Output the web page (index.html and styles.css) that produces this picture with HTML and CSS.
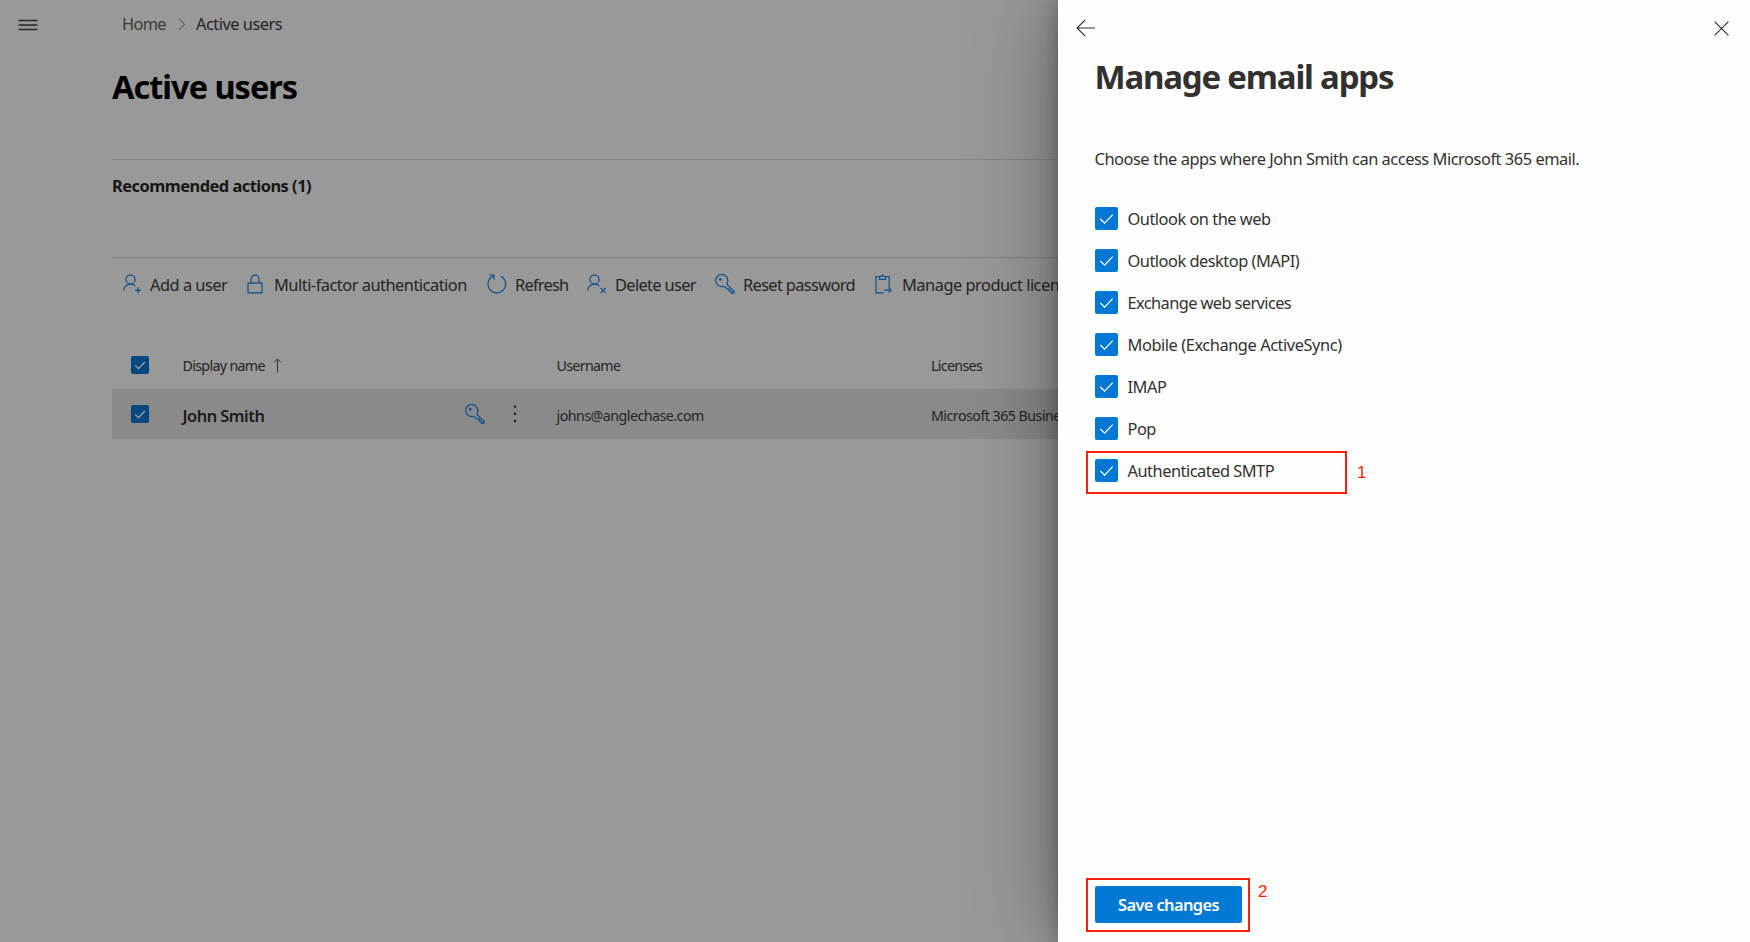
FILE: index.html
```html
<!DOCTYPE html>
<html lang="en">
<head>
<meta charset="utf-8">
<title>Active users</title>
<link rel="stylesheet" href="styles.css">
</head>
<body>
<svg class="defs" width="0" height="0">
  <symbol id="key" viewBox="0 0 20 20"><path d="M12.3 10.9 19 17.2V19.2H16.2V17.2H14.2V15.2H12.2L10.6 13.4 8.3 12.3A6 6 0 1 1 12.3 8.7Z"/><circle cx="5.3" cy="5.4" r=".7"/></symbol>
  <symbol id="check" viewBox="0 0 23 23"><path d="M5.3 12 9.6 16.1 17.7 7.7"/></symbol>
</svg>
<main class="page">
  <header class="topbar">
    <svg class="menu" width="20" height="12" viewBox="0 0 20 12"><path d="M.5 1.5h19M.5 6h19M.5 10.5h19"/></svg>
    <nav class="crumbs">
      <span class="crumb-home">Home</span>
      <svg class="chevron" width="8" height="13" viewBox="0 0 8 13"><path d="M1 .7 6.6 6.3 1 11.9"/></svg>
      <span class="crumb-current">Active users</span>
    </nav>
  </header>
  <h1 class="title">Active users</h1>
  <section class="recommended">Recommended actions (1)</section>
  <div class="toolbar">
    <span class="tool t-add"><svg class="icon" width="20" height="20" viewBox="0 0 20 20"><circle cx="7.5" cy="5.4" r="4.6"/><path d="M.8 16.5A6.7 6.7 0 0 1 12.2 12M15 13.3v6M12 16.3h6"/></svg><b>Add a user</b></span>
    <span class="tool t-mfa"><svg class="icon" width="20" height="20" viewBox="0 0 20 20"><path d="M1 9.2h14v9.6H1ZM4 9V5.2a4 4 0 0 1 8 0V9"/></svg><b>Multi-factor authentication</b></span>
    <span class="tool t-refresh"><svg class="icon" width="20" height="20" viewBox="0 0 20 20"><path d="M13.7 2.1A8.8 8.8 0 1 1 6.1 2M2.6 1h4.3v4.4"/></svg><b>Refresh</b></span>
    <span class="tool t-delete"><svg class="icon" width="20" height="20" viewBox="0 0 20 20"><circle cx="7.5" cy="5.4" r="4.6"/><path d="M.8 16.5A6.7 6.7 0 0 1 12.2 12M13.6 13.8l5 5M18.6 13.8l-5 5"/></svg><b>Delete user</b></span>
    <span class="tool t-reset"><svg class="icon" width="20" height="20"><use href="#key"/></svg><b>Reset password</b></span>
    <span class="tool t-license"><svg class="icon" width="20" height="20" viewBox="0 0 20 20"><path d="M8.5 18.8H1V2.5h3.8M10.4 2.5h3.8V13M4.6 2.5h1.5a1.6 1.6 0 0 1 3 0h1.5v2.9h-6ZM9.2 16.1h6.7M13.5 13.5l2.6 2.6-2.6 2.6"/></svg><b>Manage product licenses</b></span>
  </div>
  <div class="grid head">
    <span class="box small"><svg width="18" height="18"><use href="#check"/></svg></span>
    <span class="sort"><b class="c-name">Display name</b><svg width="10" height="15" viewBox="0 0 10 15"><path d="M4.5 14.5V1M1.2 4.3 4.5 1 7.8 4.3"/></svg></span>
    <b class="c-user">Username</b>
    <b class="c-lic">Licenses</b>
  </div>
  <div class="grid row">
    <span class="box small"><svg width="18" height="18"><use href="#check"/></svg></span>
    <span class="person"><b class="p-name">John Smith</b><svg class="icon" width="20" height="20"><use href="#key"/></svg><svg class="dots" width="4" height="18" viewBox="0 0 4 18"><circle cx="2" cy="1.6" r="1.2"/><circle cx="2" cy="8.8" r="1.2"/><circle cx="2" cy="16" r="1.2"/></svg></span>
    <b class="p-mail">johns@anglechase.com</b>
    <b class="p-lic">Microsoft 365 Business</b>
  </div>
</main>
<aside class="panel">
  <div class="panel-bar">
    <svg width="20" height="18" viewBox="0 0 20 18"><path d="M19 9H1M9.2 .8 1 9l8.2 8.2"/></svg>
    <svg width="15" height="15" viewBox="0 0 15 15"><path d="M.6.6 14.4 14.4M14.4.6.6 14.4"/></svg>
  </div>
  <h2 class="panel-title">Manage email apps</h2>
  <p class="intro">Choose the apps where John Smith can access Microsoft 365 email.</p>
  <ul class="apps">
    <li><span class="box"><svg width="23" height="23"><use href="#check"/></svg></span><b class="a1">Outlook on the web</b></li>
    <li><span class="box"><svg width="23" height="23"><use href="#check"/></svg></span><b class="a2">Outlook desktop (MAPI)</b></li>
    <li><span class="box"><svg width="23" height="23"><use href="#check"/></svg></span><b class="a3">Exchange web services</b></li>
    <li><span class="box"><svg width="23" height="23"><use href="#check"/></svg></span><b class="a4">Mobile (Exchange ActiveSync)</b></li>
    <li><span class="box"><svg width="23" height="23"><use href="#check"/></svg></span><b class="a5">IMAP</b></li>
    <li><span class="box"><svg width="23" height="23"><use href="#check"/></svg></span><b class="a6">Pop</b></li>
    <li><span class="box"><svg width="23" height="23"><use href="#check"/></svg></span><b class="a7">Authenticated SMTP</b><span class="mark mark-app"></span><span class="num num-app">1</span></li>
  </ul>
  <div class="actions">
    <button class="save">Save changes</button><span class="mark mark-save"></span><span class="num num-save">2</span>
  </div>
</aside>
</body>
</html>
```
FILE: styles.css
```css
* { box-sizing: border-box; }
html, body { margin: 0; height: 942px; overflow: hidden; }
body { position: relative; background: #999; color: #242424; font: 16.4px/22px "Noto Sans", "Open Sans", sans-serif; letter-spacing: -0.5px; }
b { font-weight: 400; white-space: nowrap; }
svg { display: block; flex: none; fill: none; }
.defs { position: absolute; }

.page { height: 942px; padding-left: 112px; }
.topbar { display: flex; align-items: center; height: 49px; margin-left: -94px; }
.menu { stroke: #292929; stroke-width: 1.3; }
.crumbs { display: flex; align-items: center; margin: -1px 0 0 84px; }
.crumb-home { width: 56px; color: #3a3a3a; letter-spacing: -0.7px; }
.crumb-current { margin-left: 10px; }
.chevron { stroke: #444; stroke-width: 1; }
.title { margin: 15px 0 0; height: 95px; font-size: 32.5px; line-height: 46px; font-weight: 700; color: #000; letter-spacing: -1px; }
.recommended { height: 98px; padding-top: 15px; border-top: 1px solid #858585; font-weight: 700; color: #161616; }
.toolbar { display: flex; height: 84px; padding: 16px 0 0 11px; border-top: 1px solid #7f7f7f; }
.tool { display: flex; height: 22px; flex: none; }
.icon { stroke: #0b4f8c; stroke-width: 1.2; }
.tool b { margin-left: 7px; line-height: 21px; }
.t-add { width: 124px; }
.t-mfa { width: 240px; }
.t-refresh { width: 100px; letter-spacing: -0.75px; }
.t-delete { width: 128px; letter-spacing: -0.65px; }
.t-reset { width: 160px; letter-spacing: -0.65px; }
.t-refresh b, .t-delete b { margin-left: 8px; }
.t-reset b { margin-left: 8px; }

.grid { display: grid; grid-template-columns: 70.5px 374px 374.5px 400px; align-items: center; height: 50px; font-size: 14.2px; }
.head { height: 48px; }
.head b { padding-top: 1px; letter-spacing: -0.65px; }
.row { background: #8a8a8a; height: 50px; }
.row b { padding-top: 3px; }
.box { display: block; width: 23px; height: 23px; flex: none; border-radius: 2px; background: #0078d4; stroke: #fff; stroke-width: 1.2; }
.small { width: 18px; height: 18px; margin-left: 19px; background: #00487f; stroke: #aaa; stroke-width: 1.5; }
.head .small { margin-top: -1px; }
.sort { display: flex; align-items: center; gap: 8px; stroke: #333; }
.person { display: flex; align-items: center; }
.p-name { width: 282px; font-size: 16.4px; font-weight: 600; color: #1b1b1b; }
.dots { margin-left: 28px; fill: #1c1c1c; }

.panel { position: absolute; top: 0; left: 1057.5px; width: 692.5px; height: 942px; padding: 19px 21px 0 18px; background: #fefefe; color: #323130; box-shadow: 0 0 18px rgba(0,0,0,.3), 0 0 85px rgba(0,0,0,.38); }
.panel-bar { display: flex; justify-content: space-between; align-items: center; height: 18px; stroke: #2b2b2b; stroke-width: 1.1; }
.panel-title { margin: 17px 0 0 19px; font-size: 33px; line-height: 46px; font-weight: 700; letter-spacing: -1.2px; }
.intro { margin: 48px 0 0 19px; white-space: nowrap; letter-spacing: -0.46px; }
.apps { list-style: none; margin: 27px 0 0 19.5px; padding: 0; }
.apps li { position: relative; display: flex; align-items: center; gap: 9.5px; height: 42.1px; }
.apps b { padding-top: 1px; }
.a3 { letter-spacing: -0.6px; }
.a4 { letter-spacing: -0.44px; }
.mark { position: absolute; border: 2px solid #fa1e0e; }
.num { position: absolute; color: #fa1e0e; font: 17px/20px "Liberation Sans", Arial, sans-serif; }
.mark-app { left: -9px; top: 1px; width: 261px; height: 43px; }
.num-app { left: 262px; top: 13px; }
.actions { position: absolute; left: 37.5px; top: 886px; }
.save { width: 147px; height: 37px; padding: 0; border: 0; border-radius: 2px; background: #0078d4; color: #fff; font: inherit; font-weight: 600; letter-spacing: -0.6px; }
.mark-save { left: -9px; top: -8px; width: 164px; height: 54px; }
.num-save { left: 163px; top: -4px; }
```
